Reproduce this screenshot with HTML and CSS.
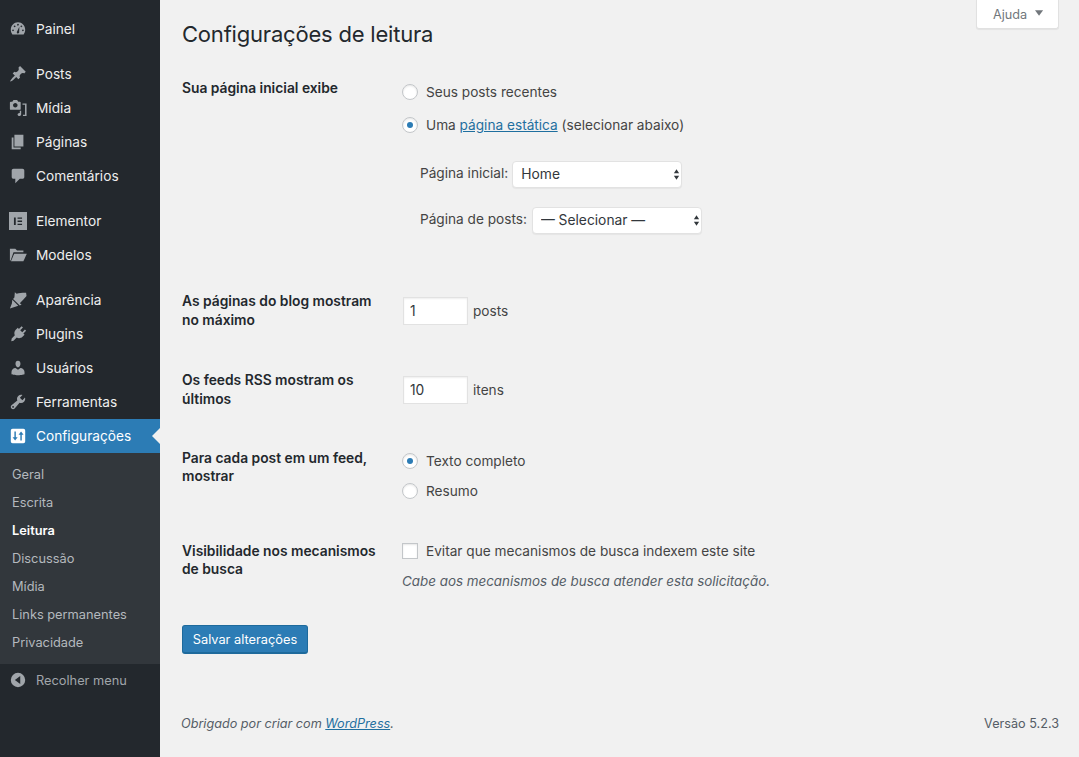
FILE: index.html
```html
<!DOCTYPE html>
<html lang="pt-BR">
<head>
<meta charset="utf-8">
<title>Configurações de leitura</title>
<link rel="stylesheet" href="styles.css">
</head>
<body>
<div class="app">
  <aside class="sidebar">
    <nav class="menu">
      <a class="item"><svg class="ic" viewBox="0 0 20 20"><path fill-rule="evenodd" d="M3.760 16h12.480c1.100-1.430 1.760-3.210 1.760-5.150 0-4.640-3.580-8.390-8-8.390s-8 3.750-8 8.390c0 1.940.66 3.720 1.760 5.150zM10 4.260c.55 0 1 .45 1 1s-.45 1-1 1-1-.45-1-1 .45-1 1-1zM4.500 10.490c.55 0 1 .45 1 1s-.45 1-1 1-1-.45-1-1 .45-1 1-1zm11 0c.55 0 1 .45 1 1s-.45 1-1 1-1-.45-1-1 .45-1 1-1zM6.240 6c.55 0 1 .45 1 1s-.45 1-1 1-1-.45-1-1 .45-1 1-1zm7.520 0c.55 0 1 .45 1 1s-.45 1-1 1-1-.45-1-1 .45-1 1-1zM11.500 7.500l-.2 5.800c.3.600-.3 1.700-1.300 1.700s-1.500-1-1.300-1.700z"/></svg><span>Painel</span></a>
      <div class="sep"></div>
      <a class="item"><svg class="ic" viewBox="0 0 20 20"><path d="M10.440 3.020l1.820-1.820 6.360 6.350-1.830 1.820c-1.050-.68-2.480-.57-3.410.36l-.75.75c-.92.93-1.040 2.350-.35 3.410l-1.830 1.820-2.410-2.410-2.800 2.790c-.42.42-3.380 2.710-3.800 2.290s1.860-3.390 2.280-3.810l2.790-2.790L4.100 9.360l1.830-1.820c1.050.69 2.480.57 3.400-.36l.75-.75c.93-.92 1.050-2.350.36-3.410z"/></svg><span>Posts</span></a>
      <a class="item"><svg class="ic" viewBox="0 0 20 20"><path fill-rule="evenodd" d="M13 11V4c0-.55-.45-1-1-1h-1.670L9 1H5L3.670 3H2c-.55 0-1 .45-1 1v7c0 .55.45 1 1 1h10c.55 0 1-.45 1-1zM7 4.500c1.380 0 2.500 1.120 2.500 2.500S8.380 9.500 7 9.500 4.500 8.380 4.500 7 5.620 4.500 7 4.500z"/><path d="M15 5h4.500v14H15.500v-1.500h2.300V6.500H15zM13.500 13v4.300c0 1-.9 1.700-2 1.700s-2-.7-2-1.700.9-1.800 2-1.800c.2 0 .3 0 .5.100V13z"/></svg><span>Mídia</span></a>
      <a class="item"><svg class="ic" viewBox="0 0 20 20"><path d="M6 15V2h10v13H6zm-1 1h8v2H3V5h2v11z"/></svg><span>Páginas</span></a>
      <a class="item"><svg class="ic" viewBox="0 0 20 20"><path d="M5 2h10c1.100 0 2 .9 2 2v7c0 1.100-.9 2-2 2h-3l-5 5v-5H5c-1.100 0-2-.9-2-2V4c0-1.100.9-2 2-2z"/></svg><span>Comentários</span></a>
      <div class="sep"></div>
      <a class="item"><svg class="ic" viewBox="0 0 20 20"><path fill-rule="evenodd" d="M0 0h20v20H0zM5.500 6v8.500h2V6zM9.500 6v1.500h5V6zM9.500 9.500V11h5V9.500zM9.500 13v1.500h5V13z"/></svg><span>Elementor</span></a>
      <a class="item"><svg class="ic" viewBox="0 0 20 20"><path d="M1 16V3h6l2 2h7v2H5L1.800 16z"/><path d="M5.800 8.500H19.800L16 17H2.200z"/></svg><span>Modelos</span></a>
      <div class="sep"></div>
      <a class="item"><svg class="ic" viewBox="0 0 20 20"><path d="M6.500 1.500L8.500 3c3-.5 7-1.200 10.500-1l.5 3.500c-2.500 2.800-5 5.300-7.500 8L14 15l-2 1.200L4.500 8.800 6 7.300z" /><path d="M3.700 9.800l6.600 6.600-3.300 1.200L1 19.500l2.200-5.700z"/></svg><span>Aparência</span></a>
      <a class="item"><svg class="ic" viewBox="0 0 20 20"><path d="M14 1.500l1.500 1.400-3 3 2.200 2.100 3-3L19 6.500l-3 3 1.300 1.200-2.300 2.300c-1.800 1.800-4.400 2.100-6.400.9L5 17.500 2.500 18l.5-3 3.500-3.500c-1-2.100-.7-4.700 1-6.300L9.800 3 11 4.500z"/></svg><span>Plugins</span></a>
      <a class="item"><svg class="ic" viewBox="0 0 20 20"><path d="M10 9.250c-2.270 0-2.730-3.440-2.730-3.440C7 4.020 7.820 2 9.970 2c2.160 0 2.980 2.020 2.710 3.810 0 0-.41 3.440-2.680 3.440zm0 2.570L12.720 10c2.390 0 4.520 2.330 4.520 4.530v2.490s-3.650 1.130-7.240 1.130c-3.650 0-7.240-1.130-7.240-1.130v-2.490c0-2.250 1.940-4.480 4.470-4.480z"/></svg><span>Usuários</span></a>
      <a class="item"><svg class="ic" viewBox="0 0 20 20"><path fill-rule="evenodd" d="M16.680 9.770c-1.340 1.340-3.300 1.670-4.950.99l-5.410 6.520c-.99.99-2.590.99-3.580 0s-.99-2.590 0-3.570l6.520-5.420c-.68-1.650-.35-3.610.99-4.950 1.280-1.280 3.120-1.620 4.720-1.060l-2.890 2.890 2.820 2.820 2.860-2.870c.53 1.580.18 3.400-1.080 4.650zM3.810 16.210c.4.390 1.030.39 1.420 0 .4-.4.4-1.030 0-1.430-.39-.39-1.020-.39-1.420 0-.39.4-.39 1.030 0 1.430z"/></svg><span>Ferramentas</span></a>
      <a class="item active"><svg class="ic" viewBox="0 0 20 20"><path fill-rule="evenodd" d="M4 2h12a2 2 0 0 1 2 2v12a2 2 0 0 1-2 2H4a2 2 0 0 1-2-2V4a2 2 0 0 1 2-2zM6 5v6.500H4L6.800 15l2.800-3.500H7.600V5zM12.600 15V8.500h-2L13.400 5l2.800 3.500h-2V15z"/></svg><span>Configurações</span></a>
      <div class="submenu">
        <a>Geral</a>
        <a>Escrita</a>
        <a class="current">Leitura</a>
        <a>Discussão</a>
        <a>Mídia</a>
        <a>Links permanentes</a>
        <a>Privacidade</a>
      </div>
      <a class="collapse"><svg class="ic" viewBox="0 0 20 20"><path fill-rule="evenodd" d="M10 2a8 8 0 1 1 0 16 8 8 0 0 1 0-16zM12.500 5.500L6.500 10l6 4.500z"/></svg><span>Recolher menu</span></a>
    </nav>
  </aside>
  <main class="content">
    <div class="help-wrap"><button class="help">Ajuda<svg class="caret" viewBox="0 0 10 6"><path d="M0 0h9L4.500 6z"/></svg></button></div>
    <h1>Configurações de leitura</h1>
    <form class="form">
      <div class="row row-front">
        <div class="th">Sua página inicial exibe</div>
        <div class="td">
          <label class="opt"><input type="radio" name="front"><span>Seus posts recentes</span></label>
          <label class="opt opt-2"><input type="radio" name="front" checked><span>Uma <a class="link">página estática</a> (selecionar abaixo)</span></label>
          <div class="subfields">
            <div class="field field-1"><span class="field-label">Página inicial:</span><div class="select"><select><option>Home</option></select><svg class="updown" viewBox="0 0 8 12"><path d="M4 0l3 4.500H1zM4 12L1 7.500h6z"/></svg></div></div>
            <div class="field"><span class="field-label">Página de posts:</span><div class="select"><select><option>— Selecionar —</option></select><svg class="updown" viewBox="0 0 8 12"><path d="M4 0l3 4.500H1zM4 12L1 7.500h6z"/></svg></div></div>
          </div>
        </div>
      </div>
      <div class="row row-blog">
        <div class="th">As páginas do blog mostram no máximo</div>
        <div class="td inline"><input class="num" type="text" value="1"><span>posts</span></div>
      </div>
      <div class="row row-rss">
        <div class="th">Os feeds RSS mostram os últimos</div>
        <div class="td inline"><input class="num" type="text" value="10"><span>itens</span></div>
      </div>
      <div class="row row-feed">
        <div class="th">Para cada post em um feed, mostrar</div>
        <div class="td">
          <label class="opt"><input type="radio" name="feed" checked><span>Texto completo</span></label>
          <label class="opt opt-3"><input type="radio" name="feed"><span>Resumo</span></label>
        </div>
      </div>
      <div class="row row-vis">
        <div class="th">Visibilidade nos mecanismos de busca</div>
        <div class="td">
          <label class="opt"><input type="checkbox"><span>Evitar que mecanismos de busca indexem este site</span></label>
          <p class="desc">Cabe aos mecanismos de busca atender esta solicitação.</p>
        </div>
      </div>
      <button class="save" type="button">Salvar alterações</button>
    </form>
    <footer class="footer">
      <span class="thanks">Obrigado por criar com <a class="link">WordPress</a>.</span>
      <span>Versão 5.2.3</span>
    </footer>
  </main>
</div>
</body>
</html>
```
FILE: styles.css
```css
* { box-sizing: border-box; }
html, body { margin: 0; height: 757px; overflow: hidden; }
body { background: #f1f1f1; color: #444; font-family: Inter, "Liberation Sans", sans-serif; font-size: 13.65px; line-height: 19px; }
.app { display: flex; height: 757px; }

.sidebar { width: 160px; flex: none; background: #23282d; color: #eee; padding-top: 12px; }
.menu { display: flex; flex-direction: column; }
.item { display: flex; align-items: center; height: 34px; padding-left: 9px; gap: 9px; font-size: 13.7px; color: #eee; position: relative; }
.ic { width: 18px; height: 18px; fill: #a0a5aa; flex: none; }
.sep { height: 11px; }
.item.active { background: #2c7cb5; color: #fff; }
.item.active .ic { fill: #fff; }
.item.active::after { content: ""; position: absolute; right: 0; top: 9px; border: 8px solid transparent; border-right-color: #f1f1f1; border-left-width: 0; }
.submenu { background: #32373c; padding: 7px 0 8px; display: flex; flex-direction: column; }
.submenu a { height: 28px; padding-left: 12px; display: flex; align-items: center; font-size: 12.8px; color: #b4b9be; }
.submenu a.current { color: #fff; font-weight: 600; }
.collapse { display: flex; align-items: center; height: 32px; padding-left: 9px; gap: 9px; color: #a0a5aa; font-size: 12.8px; }

.content { flex: 1; padding: 0 20px 0 22px; position: relative; display: flex; flex-direction: column; }
.help-wrap { position: absolute; top: 0; right: 20px; }
.help { display: flex; align-items: center; gap: 8px; height: 29px; width: 83px; padding: 0 0 0 16px; border: 1px solid #e1e1e1; border-top: 0; background: #fff; color: #72777c; font: inherit; font-size: 12.7px; border-radius: 0 0 3px 3px; box-shadow: 0 1px 1px rgba(0,0,0,.06); }
.caret { width: 9px; height: 6px; fill: #72777c; margin-top: -2px; }
h1 { margin: 0; padding-top: 20px; height: 68px; font-size: 22px; letter-spacing: -.2px; line-height: 28px; font-weight: 400; color: #23282d; }

.form { display: flex; flex-direction: column; }
.row { display: flex; }
.th { width: 220px; flex: none; padding-right: 18px; font-weight: 600; color: #23282d; font-size: 13.8px; line-height: 19px; }
.td { flex: 1; }
.opt { display: flex; align-items: center; gap: 8px; height: 20px; }
.opt-2 { margin-top: 13px; }
.opt-3 { margin-top: 10px; }
.link { color: #1f6f9f; text-decoration: underline; }
input[type=radio], input[type=checkbox] { appearance: none; margin: 0; width: 16px; height: 16px; background: #fff; border: 1px solid #c3c6c9; box-shadow: inset 0 1px 2px rgba(0,0,0,.1); flex: none; }
input[type=radio] { border-radius: 50%; position: relative; }
input[type=radio]:checked::before { content: ""; position: absolute; left: 4px; top: 4px; width: 6px; height: 6px; border-radius: 50%; background: #2c7cb5; }
.subfields { padding: 26px 0 0 18px; display: flex; flex-direction: column; gap: 20px; }
.field { display: flex; align-items: center; gap: 5px; height: 26px; }
.field-1 { gap: 4px; }
.field-label { padding-bottom: 2px; }
.select { position: relative; display: flex; }
.select select { appearance: none; width: 170px; height: 27px; padding: 0 8px; border: 1px solid #e2e2e2; border-radius: 4px; background: #fff; font: inherit; font-size: 13.8px; color: #32373c; box-shadow: 0 1px 1px rgba(0,0,0,.05); }
.updown { position: absolute; right: 2px; top: 8px; width: 7px; height: 11px; fill: #32373c; }
.row-front { margin-top: 10px; height: 209px; }
.row-front .th { padding-top: 1px; }
.row-front .td { padding-top: 4px; }
.row-blog { height: 79px; }
.row-blog .th { padding-top: 5px; }
.row-blog .td { padding-top: 10px; }
.row-rss { height: 71px; }
.row-rss .th { padding-top: 5px; }
.row-rss .td { padding-top: 10px; }
.row-feed { height: 104px; }
.row-feed .th { padding-top: 12px; line-height: 18px; }
.row-feed .td { padding-top: 14px; }
.row-vis .th { padding-top: 1px; line-height: 18px; }
.inline { display: flex; align-items: flex-start; gap: 5px; padding-left: 1px; }
.inline span { line-height: 29px; }
.num { width: 65px; height: 28px; padding: 0 6px; border: 1px solid #e2e2e2; background: #fff; font: inherit; font-size: 13.8px; color: #32373c; box-shadow: inset 0 1px 2px rgba(0,0,0,.07); }
input[type=checkbox] { border-radius: 0; }
.desc { margin: 11px 0 0; font-style: italic; color: #555d66; font-size: 13.4px; }
.row-vis { height: 84px; }
.save { width: 126px; height: 29px; padding: 0; background: #2c7cb5; border: 1px solid #1e6a9c; border-bottom-width: 2px; border-radius: 3px; color: #fff; font: inherit; font-size: 12.8px; }

.footer { margin-top: 60px; display: flex; justify-content: space-between; color: #555d66; font-size: 12.65px; margin-left: -1px; }
.thanks { font-style: italic; }
```
